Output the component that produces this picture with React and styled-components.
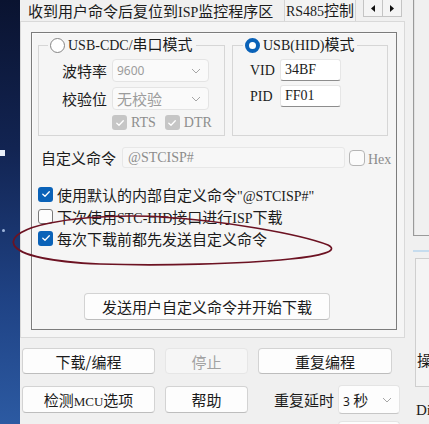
import React from "react";
import styled, { createGlobalStyle } from "styled-components";

const GlobalStyle = createGlobalStyle`
  html, body {
    margin: 0;
    padding: 0;
    background: #f0f0f0;
  }
  body {
    font-family: "Noto Sans CJK SC", "Noto Sans", sans-serif;
  }
`;

export default function App() {
  return (
    <>
      <GlobalStyle />
      <Screen>
        <Desktop />
        <Window>
          <MainColumn>
            <TabBar>
              <TabTitle>
                收到用户命令后复位到<Lat>ISP</Lat>监控程序区
              </TabTitle>
              <Tab>
                <Lat>RS485</Lat>控制
              </Tab>
              <TabScroller>
                <ScrollBtn>
                  <Arrow dir="left" />
                </ScrollBtn>
                <ScrollBtn>
                  <Arrow dir="right" />
                </ScrollBtn>
              </TabScroller>
            </TabBar>

            <Panel>
              <Frame>
                <Groups>
                  <Group $width={187}>
                    <Legend $offset={9}>
                      <Radio />
                      <span>
                        <Lat>USB-CDC/</Lat>串口模式
                      </span>
                    </Legend>
                    <SerialGrid>
                      <FieldLabel>波特率</FieldLabel>
                      <Select $width={97} $disabled>
                        <SmallSans>9600</SmallSans>
                        <Chevron />
                      </Select>
                      <FieldLabel>校验位</FieldLabel>
                      <Select $width={97} $disabled>
                        <span>无校验</span>
                        <Chevron />
                      </Select>
                      <span />
                      <FlagRow>
                        <CheckItem>
                          <Check $on $disabled>
                            <Tick />
                          </Check>
                          <Lat>RTS</Lat>
                        </CheckItem>
                        <CheckItem>
                          <Check $on $disabled>
                            <Tick />
                          </Check>
                          <Lat>DTR</Lat>
                        </CheckItem>
                      </FlagRow>
                    </SerialGrid>
                  </Group>

                  <Group $width={156}>
                    <Legend $offset={10}>
                      <Radio $on />
                      <span>
                        <Lat>USB(HID)</Lat>模式
                      </span>
                    </Legend>
                    <HidGrid>
                      <FieldLabel>
                        <Lat>VID</Lat>
                      </FieldLabel>
                      <TextInput>
                        <Lat>34BF</Lat>
                      </TextInput>
                      <FieldLabel>
                        <Lat>PID</Lat>
                      </FieldLabel>
                      <TextInput>
                        <Lat>FF01</Lat>
                      </TextInput>
                    </HidGrid>
                  </Group>
                </Groups>

                <CommandRow>
                  <CommandLabel>自定义命令</CommandLabel>
                  <CommandInput>
                    <Lat>@STCISP#</Lat>
                  </CommandInput>
                  <HexBox />
                  <HexText>
                    <Lat>Hex</Lat>
                  </HexText>
                </CommandRow>

                <OptionList>
                  <Option>
                    <Check $on>
                      <Tick />
                    </Check>
                    <span>
                      使用默认的内部自定义命令<Lat>"@STCISP#"</Lat>
                    </span>
                  </Option>
                  <Option>
                    <Check />
                    <span>
                      下次使用<Lat>STC-HID</Lat>接口进行<Lat>ISP</Lat>下载
                    </span>
                  </Option>
                  <Option>
                    <Check $on>
                      <Tick />
                    </Check>
                    <span>每次下载前都先发送自定义命令</span>
                  </Option>
                </OptionList>

                <SendButton>发送用户自定义命令并开始下载</SendButton>
              </Frame>
            </Panel>

            <Actions>
              <Button>下载/编程</Button>
              <Button $disabled>停止</Button>
              <Button>重复编程</Button>

              <Button>
                <span>
                  检测<Lat $size={13}>MCU</Lat>选项
                </span>
              </Button>
              <Button>帮助</Button>
              <Setting>
                <span>重复延时</span>
                <Select $width={62} $height={29}>
                  <span>
                    <SmallSans>3</SmallSans> 秒
                  </span>
                  <Chevron />
                </Select>
              </Setting>

              <span />
              <span />
              <Setting>
                <span>重复次数</span>
                <Select $width={62} $height={29}>
                  <span>无限</span>
                  <Chevron />
                </Select>
              </Setting>
            </Actions>
          </MainColumn>

          <SideColumn>
            <SideFrame />
            <SideRule />
            <SideBox>操</SideBox>
            <SideText>
              <Lat $size={15}>Di</Lat>
            </SideText>
          </SideColumn>
        </Window>

        <Annotation viewBox="0 0 429 424">
          <path
            d="M 160 217 C 220 220, 300 234, 328 245 C 340 251, 320 256, 290 259 C 240 264, 160 266, 100 264 C 55 262, 20 256, 14 245 C 10 236, 25 228, 50 223 C 75 218, 110 214, 168 217"
            fill="none"
            stroke="#6c1222"
            strokeWidth="1.7"
            strokeLinecap="round"
          />
        </Annotation>
      </Screen>
    </>
  );
}

const Arrow = ({ dir }) => (
  <svg width="4" height="7" viewBox="0 0 4 7">
    <path d={dir === "left" ? "M4 0 L0 3.5 L4 7 Z" : "M0 0 L4 3.5 L0 7 Z"} fill="#111" />
  </svg>
);

const Tick = () => (
  <svg width="10" height="10" viewBox="0 0 10 10">
    <path d="M1.8 5.2 L4 7.3 L8.3 2.7" fill="none" stroke="#fff" strokeWidth="1.3" strokeLinecap="round" strokeLinejoin="round" />
  </svg>
);

const Chevron = () => (
  <svg width="10" height="6" viewBox="0 0 10 6">
    <path d="M1 1 L5 5 L9 1" fill="none" stroke="#a6a6a6" strokeWidth="1" />
  </svg>
);

// Latin text in the old bitmap-looking serif
const Lat = styled.span`
  font-family: "Liberation Serif", "DejaVu Serif", serif;
  font-size: ${(props) => props.$size || 14}px;
`;

const SmallSans = styled.span`
  font-family: "Noto Sans", "Open Sans", sans-serif;
  font-size: 12px;
`;

const Screen = styled.div`
  position: relative;
  display: flex;
  width: 429px;
  height: 424px;
  overflow: hidden;
  background: #f0f0f0;
  color: #1b1b1b;
  font-family: "Noto Sans CJK SC", "Noto Sans", sans-serif;
  font-size: 15px;
`;

const Desktop = styled.div`
  position: relative;
  flex: none;
  width: 20px;
  background: linear-gradient(180deg, #0a1330 0%, #122452 35%, #1f4284 70%, #2c5aa2 100%);

  &::before {
    content: "";
    position: absolute;
    left: 0;
    top: 150px;
    width: 5px;
    height: 6px;
    background: #e8eef8;
  }

  &::after {
    content: "";
    position: absolute;
    left: 2px;
    top: 229px;
    width: 3px;
    height: 3px;
    border-radius: 50%;
    background: #9fb6dc;
  }
`;

const Window = styled.div`
  display: flex;
  flex: 1;
`;

const MainColumn = styled.div`
  display: flex;
  flex-direction: column;
  width: 385px;
  flex: none;

  & > * {
    flex: none;
  }
`;

const TabBar = styled.div`
  display: flex;
  align-items: flex-start;
  height: 21px;
`;

const TabTitle = styled.div`
  flex: 1;
  padding-left: 8px;
  line-height: 22px;
  white-space: nowrap;
  overflow: hidden;
`;

const Tab = styled.div`
  width: 72px;
  height: 21px;
  box-sizing: border-box;
  border: 1px solid #d4d4d4;
  border-top: none;
  border-bottom: none;
  background: #f3f3f3;
  text-align: center;
  line-height: 20px;
  white-space: nowrap;
`;

const TabScroller = styled.div`
  display: flex;
  margin: 0 3px 0 7px;
  height: 17px;
  box-sizing: border-box;
  border: 1px solid #c4c4c4;
  border-top: none;
  background: #f4f4f4;
`;

const ScrollBtn = styled.div`
  display: flex;
  align-items: center;
  justify-content: center;
  width: 18px;

  & + & {
    border-left: 1px solid #c4c4c4;
  }
`;

const Panel = styled.div`
  display: flex;
  height: 317px;
  box-sizing: border-box;
  padding: 10px 7px 7px 10px;
  border: 1px solid #d9d9d9;
  background: #f5f5f5;
`;

const Frame = styled.div`
  display: flex;
  flex: 1;
  flex-direction: column;
  box-sizing: border-box;
  padding: 3px 0 9px 6px;
  border: 1px solid #7c7c7c;
  box-shadow: inset 1px 1px 0 #fbfbfb;
`;

const Groups = styled.div`
  display: flex;
  gap: 7px;
`;

const Group = styled.fieldset`
  width: ${(props) => props.$width}px;
  height: 100px;
  box-sizing: border-box;
  margin: 0;
  padding: 0;
  min-width: 0;
  border: 1px solid #d6d6d6;
`;

const Legend = styled.legend`
  display: flex;
  align-items: center;
  gap: 3px;
  height: 18px;
  margin-left: ${(props) => props.$offset}px;
  padding: 0 3px 0 2px;
  line-height: 18px;
  white-space: nowrap;
`;

const Radio = styled.span`
  width: 15px;
  height: 15px;
  box-sizing: border-box;
  border-radius: 50%;
  background: #fff;
  border: ${(props) => (props.$on ? "4px solid #0a62b8" : "1px solid #858585")};
`;

const SerialGrid = styled.div`
  display: grid;
  grid-template-columns: 45px 97px;
  grid-auto-rows: 23px;
  column-gap: 5px;
  row-gap: 5px;
  padding: 5px 0 0 23px;
`;

const HidGrid = styled.div`
  display: grid;
  grid-template-columns: 23px 61px;
  grid-auto-rows: 22px;
  column-gap: 7px;
  row-gap: 4px;
  padding: 5px 0 0 17px;
`;

const FieldLabel = styled.span`
  align-self: center;
  line-height: 20px;
  white-space: nowrap;
`;

const Select = styled.div`
  display: flex;
  align-items: center;
  justify-content: space-between;
  width: ${(props) => props.$width}px;
  height: ${(props) => props.$height || 23}px;
  box-sizing: border-box;
  padding: 0 7px 0 4px;
  border: 1px solid #e4e4e4;
  border-bottom-color: ${(props) => (props.$disabled ? "#e4e4e4" : "#c6c6c6")};
  border-radius: 4px;
  background: ${(props) => (props.$disabled ? "#fafafa" : "#fdfdfd")};
  color: ${(props) => (props.$disabled ? "#9c9c9c" : "#1b1b1b")};
  white-space: nowrap;
  flex: none;
`;

const FlagRow = styled.div`
  display: flex;
  align-items: center;
  gap: 9px;
  height: 15px;
  color: #8d8d8d;
`;

const CheckItem = styled.span`
  display: flex;
  align-items: center;
  gap: 4px;
`;

const Check = styled.span`
  display: inline-flex;
  align-items: center;
  justify-content: center;
  flex: none;
  width: 15px;
  height: 15px;
  box-sizing: border-box;
  border-radius: 3px;
  background: ${(props) =>
    props.$on ? (props.$disabled ? "#c6c6c6" : "#0a62b8") : "#fdfdfd"};
  border: 1px solid
    ${(props) => (props.$on ? "transparent" : "#7a7a7a")};
`;

const TextInput = styled.div`
  display: flex;
  align-items: center;
  box-sizing: border-box;
  padding-left: 4px;
  border: 1px solid #e6e6e6;
  border-bottom: 1px solid #8d8d8d;
  border-radius: 3px;
  background: #fff;
`;

const CommandRow = styled.div`
  display: flex;
  align-items: center;
  height: 21px;
  margin-top: 11px;
  padding-left: 3px;
`;

const CommandLabel = styled.span`
  width: 81px;
  white-space: nowrap;
`;

const CommandInput = styled.div`
  display: flex;
  align-items: center;
  width: 223px;
  height: 21px;
  box-sizing: border-box;
  padding-left: 5px;
  border: 1px solid #e7e7e7;
  border-radius: 3px;
  background: #f7f7f7;
  color: #8c8c8c;
`;

const HexBox = styled.span`
  width: 16px;
  height: 16px;
  box-sizing: border-box;
  margin-left: 4px;
  border: 1px solid #b5b5b5;
  border-radius: 4px;
  background: #fbfbfb;
`;

const HexText = styled.span`
  margin-left: 3px;
  color: #8c8c8c;
`;

const OptionList = styled.div`
  display: flex;
  flex-direction: column;
  margin-top: 15px;
`;

const Option = styled.div`
  display: flex;
  align-items: center;
  gap: 4px;
  height: 22px;
  white-space: nowrap;
`;

const Button = styled.div`
  display: flex;
  align-items: center;
  justify-content: center;
  box-sizing: border-box;
  border: 1px solid ${(props) => (props.$disabled ? "#e6e6e6" : "#d3d3d3")};
  border-bottom-color: ${(props) => (props.$disabled ? "#e6e6e6" : "#bdbdbd")};
  border-radius: 4px;
  background: ${(props) => (props.$disabled ? "#f6f6f6" : "#fdfdfd")};
  color: ${(props) => (props.$disabled ? "#a2a2a2" : "#1b1b1b")};
  white-space: nowrap;
`;

const SendButton = styled(Button)`
  width: 246px;
  height: 27px;
  margin-top: auto;
  margin-left: 46px;
`;

const Actions = styled.div`
  display: grid;
  grid-template-columns: 133px 83px 134px;
  grid-template-rows: 26px 27px 29px;
  column-gap: 10px;
  row-gap: 12px;
  margin-top: 10px;
  padding-left: 2px;

  & > :nth-child(n + 7) {
    margin-top: -8px;
  }
`;

const Setting = styled.div`
  display: flex;
  align-items: center;
  justify-content: flex-end;
  gap: 4px;
  margin-right: -8px;
  white-space: nowrap;
`;

const SideColumn = styled.div`
  display: flex;
  flex: 1;
  flex-direction: column;

  & > * {
    flex: none;
  }
`;

const SideFrame = styled.div`
  height: 235px;
  margin-left: 8px;
  border-left: 1px solid #9a9a9a;
  border-bottom: 1px solid #9a9a9a;
  box-shadow: inset 1px 0 0 #e2e2e2;
`;

const SideRule = styled.div`
  height: 2px;
  margin: 14px 0 0 8px;
  background: #c6dcee;
`;

const SideBox = styled.div`
  display: flex;
  align-items: flex-end;
  height: 129px;
  box-sizing: border-box;
  margin: 6px 0 0 10px;
  padding: 0 0 16px 1px;
  border: 1px solid #cfcfcf;
  border-right: none;
  background: #f4f4f4;
  line-height: 20px;
`;

const SideText = styled.div`
  margin: 12px 0 0 11px;
  line-height: 20px;
`;

const Annotation = styled.svg`
  position: absolute;
  left: 0;
  top: 0;
  width: 429px;
  height: 424px;
  pointer-events: none;
`;
